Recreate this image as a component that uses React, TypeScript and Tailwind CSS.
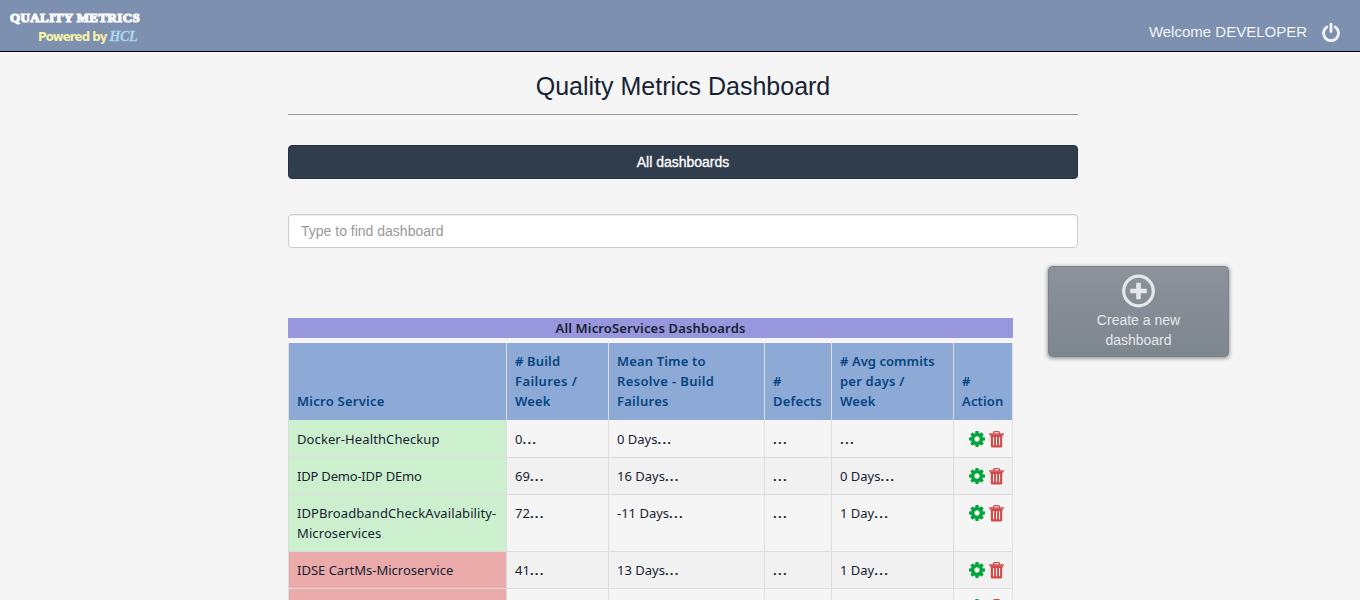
import type { ReactNode } from 'react';
import clsx from 'clsx';

function PowerIcon() {
  return (
    <svg className="ml-[14px] mt-[22px]" width="20" height="20" viewBox="0 0 20 20" fill="none" stroke="#f4f4f4" strokeWidth="2.800" strokeLinecap="round">
      <path d="M5.700 5.100A7.500 7.500 0 1 0 14.300 5.100" />
      <path d="M10 2.200V9.500" />
    </svg>
  );
}

function GearIcon() {
  return (
    <svg width="16" height="16" viewBox="0 0 1536 1536" fill="#00a53c">
      <path d="M1024 768q0-106-75-181t-181-75-181 75-75 181 75 181 181 75 181-75 75-181zm512-109v222q0 12-8 23t-20 13l-185 28q-19 54-39 91 35 50 107 138 10 12 10 25t-9 23q-27 37-99 108t-94 71q-12 0-26-9l-138-108q-44 23-91 38-16 136-29 186-7 28-36 28H657q-14 0-24.500-8.500T621 1506l-28-184q-49-16-90-37l-141 107q-10 9-25 9-14 0-25-11-126-114-165-168-7-10-7-23 0-12 8-23 15-21 51-66.500t54-70.500q-27-50-41-99L29 913q-13-2-21-12.500T0 877V655q0-12 8-23t19-13l186-28q14-46 39-92-40-57-107-138-10-12-10-24 0-10 9-23 26-36 98.500-107.500T337 135q13 0 26 10l138 107q44-23 91-38 16-136 29-186 7-28 36-28h222q14 0 24.500 8.500T915 30l28 184q49 16 90 37l142-107q9-9 24-9 13 0 25 10 129 119 165 170 7 8 7 22 0 12-8 23-15 21-51 66.500t-54 70.500q26 50 41 98l183 28q13 2 21 12.500t8 23.500z" />
    </svg>
  );
}

function TrashIcon() {
  return (
    <svg width="15" height="17" viewBox="0 0 15 17" fill="none" stroke="#cf4a48">
      <path d="M4.500 3V1.700Q4.500.7 5.500.7h4q1 0 1 1V3" strokeWidth="1.200" />
      <path d="M0 3h15" strokeWidth="1.400" />
      <path
        d="M1.200 3.600h12.600v1.600h-.6v9.700q0 1.500-1.500 1.500H3.300q-1.500 0-1.500-1.500V5.200h-.6zM4 6v8.300h1.100V6zM7 6v8.300h1.100V6zM10 6v8.300h1.100V6z"
        fill="#cf4a48"
        fillRule="evenodd"
        stroke="none"
      />
    </svg>
  );
}

function PlusCircle() {
  return (
    <svg width="34" height="34" viewBox="0 0 34 34" fill="none" stroke="#e6e7ea">
      <circle cx="16.500" cy="17" r="14.800" strokeWidth="3.200" />
      <path d="M10.500 17h12M16.500 11v12" strokeWidth="4.600" strokeLinecap="square" />
    </svg>
  );
}

const columns = 'grid grid-cols-[218px_102px_156px_67px_122px_59px]';

function HeadCell({ children }: { children: ReactNode }) {
  return (
    <div className="flex flex-col justify-end whitespace-nowrap border-r border-[#ddd] bg-[#8da9d6] px-2 pb-[9px] text-[#05457f]">
      {children}
    </div>
  );
}

type Row = { name: ReactNode; ok: boolean; height: string; cells: string[] };

const rows: Row[] = [
  { name: <span className="tracking-[0.1px]">Docker-HealthCheckup</span>, ok: true, height: 'h-[38px]', cells: ['0', '0 Days', '', ''] },
  { name: <span className="tracking-[-0.2px]">IDP Demo-IDP DEmo</span>, ok: true, height: 'h-[37px]', cells: ['69', '16 Days', '', '0 Days'] },
  {
    name: (
      <>
        <span className="tracking-[0.1px]">IDPBroadbandCheckAvailability-</span>
        <br />
        <span className="tracking-[0.1px]">Microservices</span>
      </>
    ),
    ok: true,
    height: 'h-[57px]',
    cells: ['72', '-11 Days', '', '1 Day'],
  },
  { name: <span>IDSE CartMs-Microservice</span>, ok: false, height: 'h-[37px]', cells: ['41', '13 Days', '', '1 Day'] },
];

export default function App() {
  return (
    <div className="h-[600px] w-[1360px] overflow-hidden bg-[#f5f5f5] font-['Liberation_Sans',sans-serif] text-sm leading-5 text-[#172233]">
      <header className="flex h-[52px] justify-between border-b border-black bg-[#7d90af]">
        <div className="pl-[10px] pt-[10px]">
          <div className="whitespace-nowrap font-['Liberation_Serif',serif] text-[13px] font-bold leading-4 tracking-[0.4px] text-white [-webkit-text-stroke:1.1px_white]">QUALITY METRICS</div>
          <div className="flex items-baseline gap-[3px] whitespace-nowrap pl-7 pt-px leading-[18px]">
            <span className="font-['DejaVu_Sans_Condensed','DejaVu_Sans',sans-serif] text-[13px] font-bold tracking-[-0.900px] text-[#f6f2a8]">Powered by</span>
            <span className="font-['Liberation_Serif',serif] text-sm font-bold italic tracking-[-0.4px] text-[#a9d6ee] [-webkit-text-stroke:0.3px_#a9d6ee]">HCL</span>
          </div>
        </div>
        <div className="flex items-start pr-[19px] text-[#f4f4f4]">
          <span className="mt-[22px] text-[15px] leading-5">Welcome DEVELOPER</span>
          <PowerIcon />
        </div>
      </header>

      <main className="ml-[288px] w-[790px]">
        <h1 className="h-[63px] border-b border-[#999] pt-[17px] text-center text-[25px] leading-[34px]">Quality Metrics Dashboard</h1>
        <button className="mt-[30px] block h-[34px] w-full rounded-[4px] border border-[#243140] bg-[#303d4d] text-center text-white [-webkit-text-stroke:0.3px_white]">All dashboards</button>
        <input
          className="mt-[35px] block h-[34px] w-full rounded-[4px] border border-[#ccc] bg-white px-3 shadow-[inset_0_1px_1px_rgba(0,0,0,0.075)] placeholder:text-[#999]"
          placeholder="Type to find dashboard"
        />
        <div className="flex gap-[35px]">
          <section className="mt-[70px] w-[725px] shrink-0 font-['Noto_Sans',sans-serif]">
            <div className="mb-[5px] h-5 bg-[#9896dc] text-center text-[13px] font-semibold tracking-[0.15px]">All MicroServices Dashboards</div>
            <div className="border-l border-[#ddd]">
              <div className={clsx(columns, 'h-[77px] text-[13px] font-semibold tracking-[0.150px]')}>
                <HeadCell><span className="tracking-[0.25px]">Micro Service</span></HeadCell>
                <HeadCell><span># Build</span><span className="tracking-[0.4px]">Failures /</span><span>Week</span></HeadCell>
                <HeadCell><span>Mean Time to</span><span className="tracking-[0.35px]">Resolve - Build</span><span className="tracking-[0.25px]">Failures</span></HeadCell>
                <HeadCell><span>#</span><span>Defects</span></HeadCell>
                <HeadCell><span className="tracking-[0.05px]"># Avg commits</span><span className="tracking-[0.2px]">per days /</span><span>Week</span></HeadCell>
                <HeadCell><span>#</span><span>Action</span></HeadCell>
              </div>
              {rows.map((row, i) => (
                <div key={i} className={clsx(columns, row.height, 'whitespace-nowrap text-[13px]', i % 2 === 1 && 'bg-[#f1f1f1]')}>
                  <div className={clsx('border-b border-r border-[#ddd] px-2', i === 0 ? 'pt-[9px]' : 'pt-2', row.ok ? 'bg-[#ccf0cd]' : 'bg-[#eaaaaa]')}>{row.name}</div>
                  {row.cells.map((c, j) => (
                    <div key={j} className={clsx('border-b border-r border-[#ddd] px-2', i === 0 ? 'pt-[9px]' : 'pt-2')}>
                      {c}<span className="font-bold tracking-[1.300px]">...</span>
                    </div>
                  ))}
                  <div className={clsx('flex items-start gap-1 border-b border-r border-[#ddd] pl-[15px]', i === 0 ? 'pt-[11px]' : 'pt-[10px]')}>
                    <GearIcon />
                    <TrashIcon />
                  </div>
                </div>
              ))}
              <div className={clsx(columns, 'h-[37px]')}>
                <div className="border-r border-[#ddd] bg-[#eaaaaa]" />
                <div className="border-r border-[#ddd]" />
                <div className="border-r border-[#ddd]" />
                <div className="border-r border-[#ddd]" />
                <div className="border-r border-[#ddd]" />
                <div className="flex items-start gap-1 border-r border-[#ddd] pl-[15px] pt-[10px]">
                  <GearIcon />
                  <TrashIcon />
                </div>
              </div>
            </div>
          </section>
          <button className="mt-[18px] flex h-[91px] w-[181px] shrink-0 flex-col items-center rounded-[4px] border border-[#7b838d] bg-linear-to-b from-[#8d929b] to-[#7e868e] pt-[7px] text-[#e6e7ea] shadow-[0_1px_4px_rgba(0,0,0,0.5)]">
            <PlusCircle />
            <span className="mt-[2px] leading-5">Create a new<br />dashboard</span>
          </button>
        </div>
      </main>
    </div>
  );
}
